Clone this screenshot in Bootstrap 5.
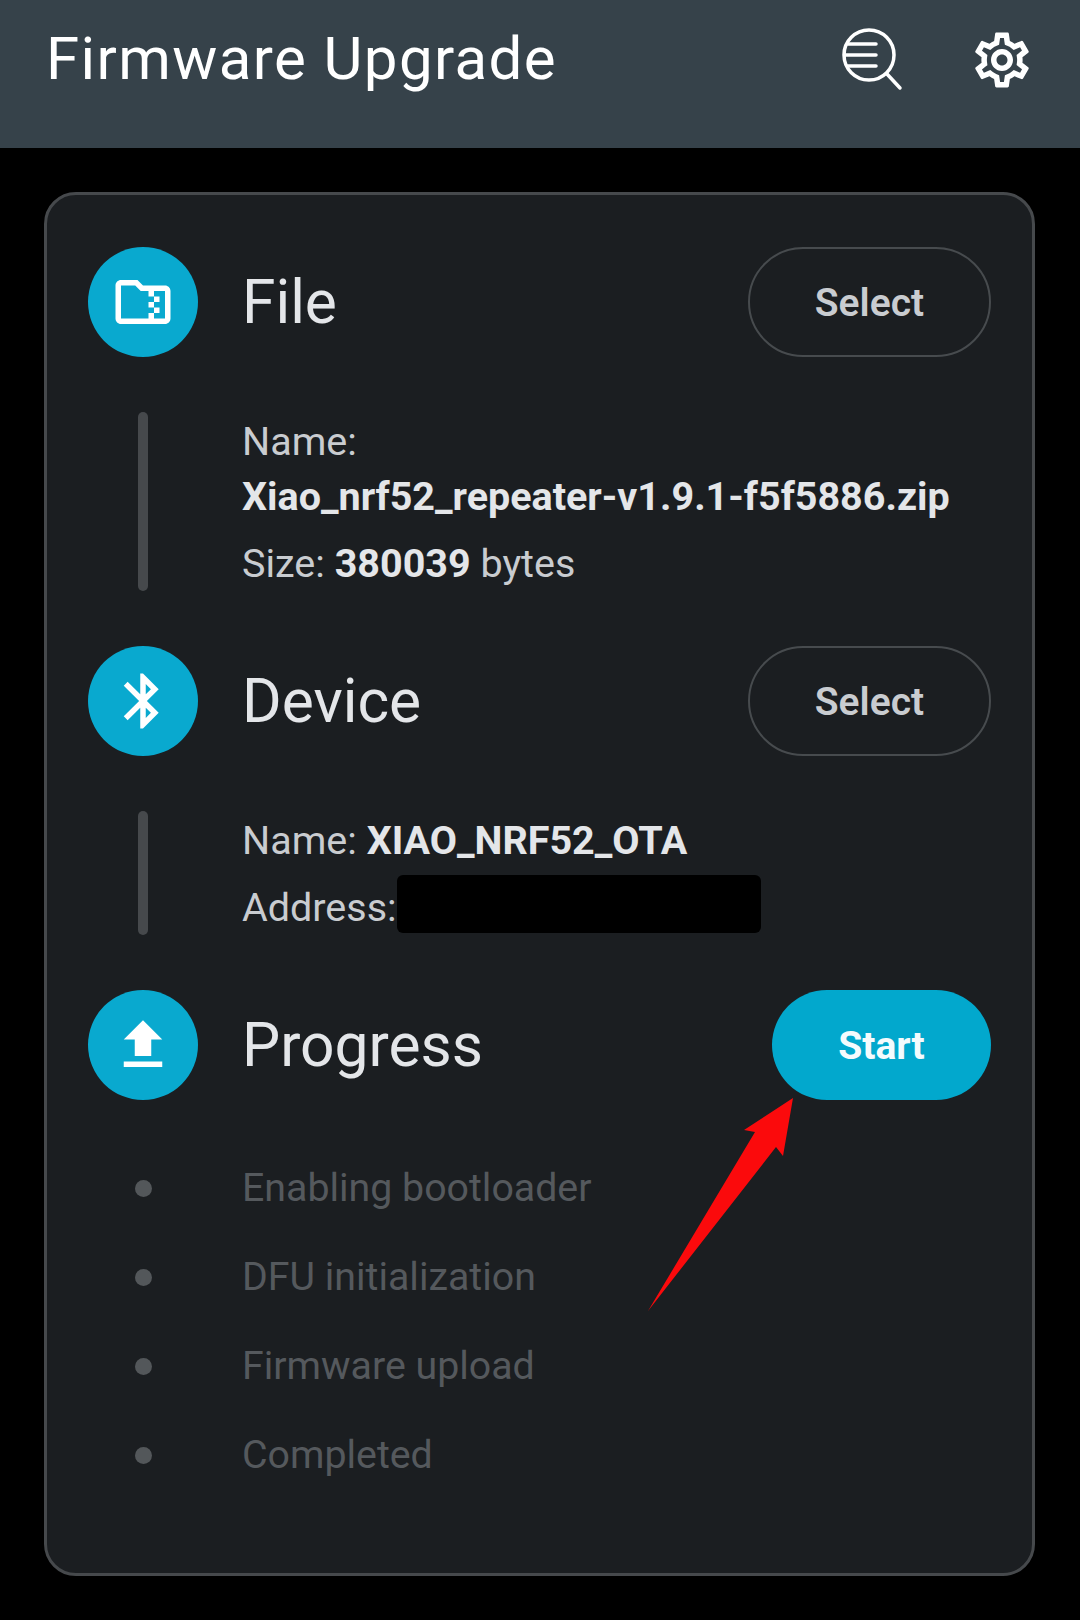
<!DOCTYPE html>
<html lang="en">
<head>
    <meta charset="UTF-8">
    <meta name="viewport" content="width=device-width, initial-scale=1.0">
    <title>Firmware Upgrade</title>
    <link href="https://cdn.jsdelivr.net/npm/bootstrap@5.3.3/dist/css/bootstrap.min.css" rel="stylesheet">
    <style>
        body {
            background-color: #000;
            font-family: Roboto, "Liberation Sans", sans-serif;
            color: #e4e6e9;
        }
        .app-bar {
            background-color: #36424a;
            height: 148px;
            padding: 0 45px 30px 46px;
        }
        .app-title {
            font-size: 60px;
            letter-spacing: 1.4px;
            color: #fff;
            line-height: 1;
        }
        .bar-icons { gap: 62px; margin-top: 2px; }
        .dfu-card {
            margin: 44px 45px 0 44px;
            height: 1384px;
            padding: 52px 41px 0;
            background-color: #1b1e21;
            border: 3px solid #46494c;
            border-radius: 32px;
        }
        .step-head { height: 110px; }
        .step-circle {
            width: 110px;
            height: 110px;
            background-color: #09a9cf;
            flex-shrink: 0;
        }
        .step-title {
            font-size: 60.5px;
            line-height: 1;
            margin-left: 44px;
            padding-top: 3px;
            color: #e4e6e9;
        }
        .pill-btn {
            height: 110px;
            font-size: 39px;
            font-weight: 600;
            border-radius: 55px;
            padding: 2px 0 0;
        }
        .pill-select {
            width: 243px;
            color: #c9ccd0;
            border: 2px solid #474b4e;
            background: transparent;
        }
        .pill-start {
            width: 219px;
            color: #f4fbfd;
            font-weight: 700;
            background-color: #02a8cd;
            border: 0;
        }
        .step-body { margin: 55px 0; }
        .rail-col { width: 110px; flex-shrink: 0; }
        .rail { width: 10px; background-color: #46494c; border-radius: 5px; }
        .step-text { margin-left: 44px; padding-top: 2px; font-size: 39.5px; line-height: 55px; color: #c9ccd0; }
        .step-text b { color: #e4e6e9; font-weight: 700; }
        .info-line { margin-bottom: 12px; }
        .info-line:last-child { margin-bottom: 0; }
        .redact {
            display: inline-block;
            width: 364px;
            height: 58px;
            margin: -12px 0 2px;
            background-color: #000;
            border-radius: 6px;
            vertical-align: middle;
        }
        .progress-list { margin-top: 44px; }
        .progress-row { height: 89px; }
        .dot { width: 17px; height: 17px; background-color: #53575a; }
        .progress-label { margin-left: 44px; font-size: 39.3px; color: #55595d; }
        .red-arrow { position: absolute; left: 0; top: 0; pointer-events: none; }
    </style>
</head>
<body>
    <nav class="navbar app-bar d-flex justify-content-between align-items-center">
        <span class="app-title">Firmware Upgrade</span>
        <div class="d-flex align-items-center bar-icons">
            <svg width="66" height="66" viewBox="0 0 66 66" fill="none" stroke="#fff" stroke-width="3.5" stroke-linecap="round">
                <circle cx="28" cy="28" r="25"/>
                <path d="M7 17H35M4 28H35M7 39H35M46 47L59 61"/>
            </svg>
            <svg width="66" height="66" viewBox="0 0 24 24" fill="#fff">
                <path d="M19.43 12.98c.04-.32.07-.64.07-.98 0-.34-.03-.66-.07-.98l2.11-1.65c.19-.15.24-.42.12-.64l-2-3.46c-.09-.16-.26-.25-.44-.25-.06 0-.12.01-.17.03l-2.49 1c-.52-.4-1.08-.73-1.69-.98l-.38-2.65C14.46 2.18 14.25 2 14 2h-4c-.25 0-.46.18-.49.42l-.38 2.65c-.61.25-1.17.59-1.69.98l-2.49-1c-.06-.02-.12-.03-.18-.03-.17 0-.34.09-.43.25l-2 3.46c-.13.22-.07.49.12.64l2.11 1.65c-.04.32-.07.65-.07.98 0 .33.03.66.07.98l-2.11 1.65c-.19.15-.24.42-.12.64l2 3.46c.09.16.26.25.44.25.06 0 .12-.01.17-.03l2.49-1c.52.4 1.08.73 1.69.98l.38 2.65c.03.24.24.42.49.42h4c.25 0 .46-.18.49-.42l.38-2.65c.61-.25 1.17-.59 1.69-.98l2.49 1c.06.02.12.03.18.03.17 0 .34-.09.43-.25l2-3.46c.12-.22.07-.49-.12-.64l-2.11-1.65zm-1.98-1.71c.04.31.05.52.05.73 0 .21-.02.43-.05.73l-.14 1.13.89.7 1.08.84-.7 1.21-1.27-.51-1.04-.42-.9.68c-.43.32-.84.56-1.25.73l-1.06.43-.16 1.13-.2 1.35h-1.4l-.19-1.35-.16-1.13-1.06-.43c-.43-.18-.83-.41-1.23-.71l-.91-.7-1.06.43-1.27.51-.7-1.21 1.08-.84.89-.7-.14-1.13c-.03-.31-.05-.54-.05-.74s.02-.43.05-.73l.14-1.13-.89-.7-1.08-.84.7-1.21 1.27.51 1.04.42.9-.68c.43-.32.84-.56 1.25-.73l1.06-.43.16-1.13.2-1.35h1.39l.19 1.35.16 1.13 1.06.43c.43.18.83.41 1.23.71l.91.7 1.06-.43 1.27-.51.7 1.21-1.07.85-.89.7.14 1.13zM12 8c-2.21 0-4 1.79-4 4s1.79 4 4 4 4-1.79 4-4-1.79-4-4-4zm0 6c-1.1 0-2-.9-2-2s.9-2 2-2 2 .9 2 2-.9 2-2 2z"/>
            </svg>
        </div>
    </nav>

    <div class="card dfu-card">
        <div class="d-flex align-items-center step-head">
            <div class="step-circle rounded-circle d-flex align-items-center justify-content-center">
                <svg width="66" height="66" viewBox="0 0 24 24" fill="#fff"><path d="M20 6h-8l-2-2H4c-1.1 0-2 .9-2 2v12c0 1.1.9 2 2 2h16c1.1 0 2-.9 2-2V8c0-1.1-.9-2-2-2zm-4 10h2v-2h-2v-2h2v-2h-2V8h4v10h-4v-2zm0 0h-2v2H4V6h5.17l2 2H14v2h2v2h-2v2h2v2z"/></svg>
            </div>
            <span class="step-title flex-grow-1">File</span>
            <button type="button" class="btn pill-btn pill-select">Select</button>
        </div>
        <div class="d-flex step-body">
            <div class="rail-col d-flex justify-content-center"><div class="rail"></div></div>
            <div class="step-text">
                <div>Name:</div>
                <div class="info-line"><b>Xiao_nrf52_repeater-v1.9.1-f5f5886.zip</b></div>
                <div class="info-line">Size: <b>380039</b> bytes</div>
            </div>
        </div>

        <div class="d-flex align-items-center step-head">
            <div class="step-circle rounded-circle d-flex align-items-center justify-content-center">
                <svg width="66" height="66" viewBox="0 0 24 24" fill="#fff"><path d="M17.71 7.71L12 2h-1v7.59L6.41 5 5 6.41 10.59 12 5 17.59 6.41 19 11 14.41V22h1l5.71-5.71-4.3-4.29 4.3-4.29zM13 5.83l1.88 1.88L13 9.59V5.83zm1.88 10.46L13 18.17v-3.76l1.88 1.88z"/></svg>
            </div>
            <span class="step-title flex-grow-1">Device</span>
            <button type="button" class="btn pill-btn pill-select">Select</button>
        </div>
        <div class="d-flex step-body">
            <div class="rail-col d-flex justify-content-center"><div class="rail"></div></div>
            <div class="step-text">
                <div class="info-line">Name: <b>XIAO_NRF52_OTA</b></div>
                <div class="info-line">Address:<span class="redact"></span></div>
            </div>
        </div>

        <div class="d-flex align-items-center step-head">
            <div class="step-circle rounded-circle d-flex align-items-center justify-content-center">
                <svg width="66" height="66" viewBox="0 0 24 24" fill="#fff"><path d="M9 16h6v-6h4l-7-7-7 7h4v6zm-4 2h14v2H5v-2z"/></svg>
            </div>
            <span class="step-title flex-grow-1">Progress</span>
            <button type="button" class="btn pill-btn pill-start">Start</button>
        </div>
        <div class="progress-list">
            <div class="d-flex align-items-center progress-row">
                <div class="rail-col d-flex justify-content-center"><div class="dot rounded-circle"></div></div>
                <span class="progress-label">Enabling bootloader</span>
            </div>
            <div class="d-flex align-items-center progress-row">
                <div class="rail-col d-flex justify-content-center"><div class="dot rounded-circle"></div></div>
                <span class="progress-label">DFU initialization</span>
            </div>
            <div class="d-flex align-items-center progress-row">
                <div class="rail-col d-flex justify-content-center"><div class="dot rounded-circle"></div></div>
                <span class="progress-label">Firmware upload</span>
            </div>
            <div class="d-flex align-items-center progress-row">
                <div class="rail-col d-flex justify-content-center"><div class="dot rounded-circle"></div></div>
                <span class="progress-label">Completed</span>
            </div>
        </div>
    </div>

    <!-- annotation drawn over the screenshot -->
    <svg class="red-arrow" width="1080" height="1620" viewBox="0 0 1080 1620">
        <polygon fill="#fb0a0c" points="793,1098 744,1130 755,1132 648,1311 776,1147 783,1156"/>
    </svg>

    <script src="https://cdn.jsdelivr.net/npm/bootstrap@5.3.3/dist/js/bootstrap.bundle.min.js"></script>
</body>
</html>
